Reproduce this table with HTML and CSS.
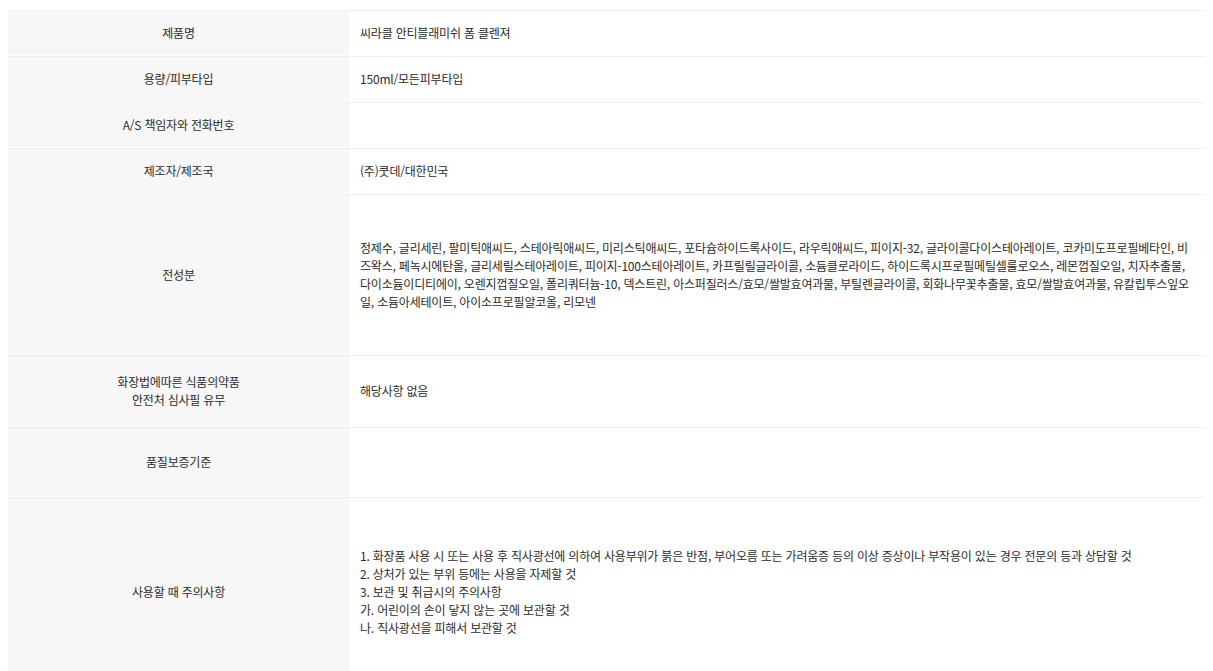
FILE: index.html
```html
<!DOCTYPE html>
<html lang="ko">
<head>
  <meta charset="UTF-8">
  <title>상품정보 제공고시</title>
  <link rel="stylesheet" href="styles.css">
</head>
<body>
  <!-- 상품정보 제공고시 표 -->
  <table class="info-table">
    <tr>
      <th>제품명</th>
      <td>씨라클 안티블래미쉬 폼 클렌져</td>
    </tr>
    <tr>
      <th>용량/피부타입</th>
      <td>150ml/모든피부타입</td>
    </tr>
    <tr>
      <th>A/S 책임자와 전화번호</th>
      <td></td>
    </tr>
    <tr>
      <th>제조자/제조국</th>
      <td>(주)쿳데/대한민국</td>
    </tr>
    <tr class="row-ingredients">
      <th>전성분</th>
      <td>정제수, 글리세린, 팔미틱애씨드, 스테아릭애씨드, 미리스틱애씨드, 포타슘하이드록사이드, 라우릭애씨드, 피이지-32, 글라이콜다이스테아레이트, 코카미도프로필베타인, 비즈왁스, 페녹시에탄올, 글리세릴스테아레이트, 피이지-100스테아레이트, 카프릴릴글라이콜, 소듐클로라이드, 하이드록시프로필메틸셀룰로오스, 레몬껍질오일, 치자추출물, 다이소듐이디티에이, 오렌지껍질오일, 폴리쿼터늄-10, 덱스트린, 아스퍼질러스/효모/쌀발효여과물, 부틸렌글라이콜, 회화나무꽃추출물, 효모/쌀발효여과물, 유칼립투스잎오일, 소듐아세테이트, 아이소프로필알코올, 리모넨</td>
    </tr>
    <tr class="row-safety">
      <th>화장법에따른 식품의약품<br>안전처 심사필 유무</th>
      <td>해당사항 없음</td>
    </tr>
    <tr class="row-quality">
      <th>품질보증기준</th>
      <td></td>
    </tr>
    <tr class="row-caution">
      <th>사용할 때 주의사항</th>
      <td>
        1. 화장품 사용 시 또는 사용 후 직사광선에 의하여 사용부위가 붉은 반점, 부어오름 또는 가려움증 등의 이상 증상이나 부작용이 있는 경우 전문의 등과 상담할 것<br>
        2. 상처가 있는 부위 등에는 사용을 자제할 것<br>
        3. 보관 및 취급시의 주의사항<br>
        가. 어린이의 손이 닿지 않는 곳에 보관할 것<br>
        나. 직사광선을 피해서 보관할 것
      </td>
    </tr>
  </table>
</body>
</html>
```

FILE: styles.css
```css
body {
  margin: 8px;
  background-color: #fff;
  color: #2b2b2b;
  font-family: "Noto Sans CJK KR", "Noto Sans", sans-serif;
  font-size: 12px;
}

.info-table {
  width: 1200px;
  margin-top: 1px;
  border-collapse: separate;
  border-spacing: 0 1px;
  table-layout: fixed;
}

.info-table th,
.info-table td {
  height: 44px;
  padding: 0 11px;
  border-top: 1px solid #efefef;
  vertical-align: middle;
  line-height: 18px;
  letter-spacing: -0.2px;
}

.info-table th {
  width: 319px;
  background-color: #f7f7f7;
  font-weight: normal;
  text-align: center;
}

.info-table td {
  background-color: #fff;
  text-align: left;
}

.row-ingredients th,
.row-ingredients td {
  height: 159px;
}

.row-safety th,
.row-safety td {
  height: 70px;
}

.row-quality th,
.row-quality td {
  height: 68px;
}

.row-caution th,
.row-caution td {
  height: 188px;
}
```
